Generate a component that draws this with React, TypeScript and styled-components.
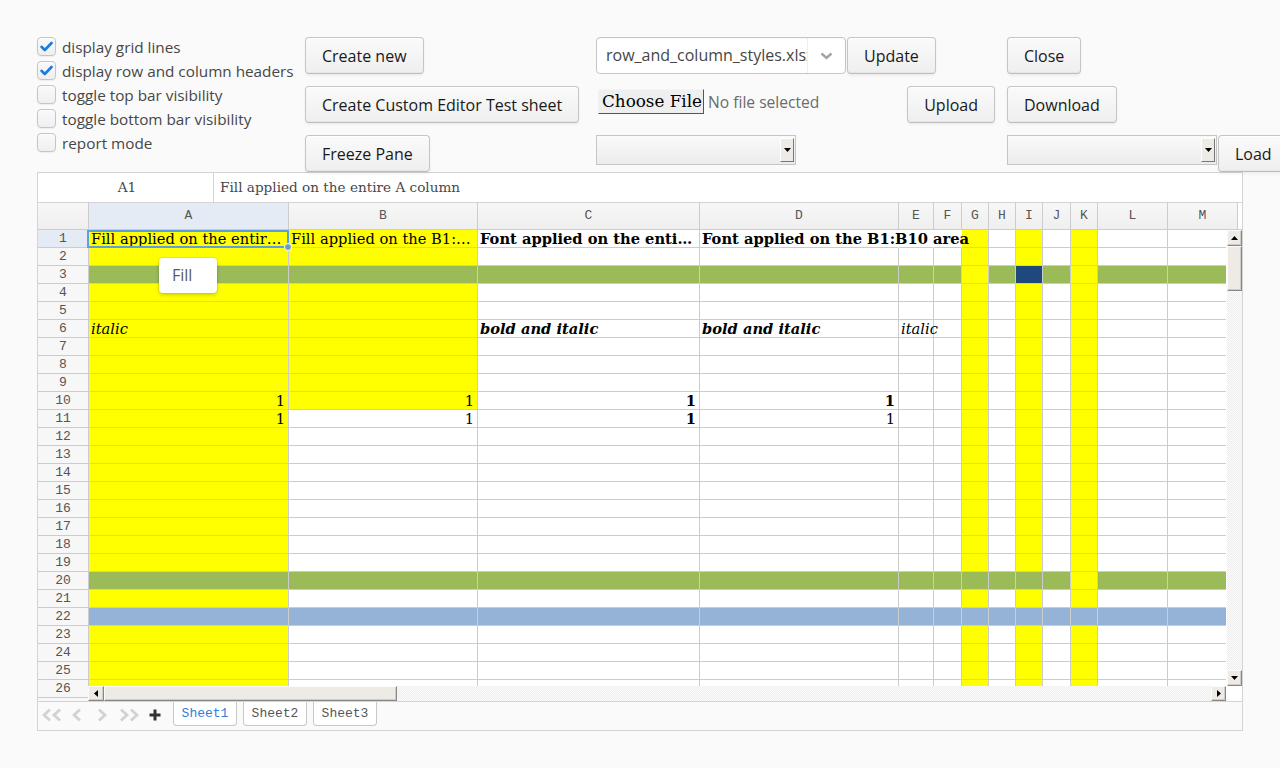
import React from "react";
import styled, { createGlobalStyle } from "styled-components";

const UI = `"Open Sans", "Noto Sans", sans-serif`;
const SERIF = `"DejaVu Serif", "Liberation Serif", serif`;
const MONO = `"Liberation Mono", "DejaVu Sans Mono", monospace`;

const YELLOW = "#ffff00";
const GREEN = "#9bbb59";
const BLUE = "#95b3d7";
const NAVY = "#1f497d";
const WHITE = "#ffffff";
const GRID = "#cccccc";

const COLS = [200, 189, 222, 199, 35, 28, 27, 27, 27, 28, 27, 70, 70];
const LETTERS = "ABCDEFGHIJKLM".split("");
const TEMPLATE = `51px ${COLS.map((w) => `${w}px`).join(" ")} 1fr`;
const ROWS = Array.from({ length: 27 }, (_, i) => i + 1);

const GlobalStyle = createGlobalStyle`
  html, body {
    margin: 0;
    padding: 0;
    background: #fafafa;
    overflow: hidden;
  }
  body {
    font-family: ${UI};
    color: #474747;
  }
`;

const Page = styled.div`
  width: 1280px;
  height: 768px;
  box-sizing: border-box;
  padding: 37px 0 0 37px;
`;

const Controls = styled.div`
  display: grid;
  grid-template-columns: 256px 279px 399px 273px;
  grid-template-rows: repeat(3, 37px);
  column-gap: 12px;
  row-gap: 12px;
`;

const Slot = styled.div<{ $col: number; $row: number; $justify?: string }>`
  grid-column: ${(p) => p.$col};
  grid-row: ${(p) => p.$row};
  display: flex;
  align-items: flex-start;
  justify-content: ${(p) => p.$justify ?? "flex-start"};
  gap: 1px;
  white-space: nowrap;
`;

const CheckList = styled.div`
  grid-column: 1;
  grid-row: 1 / span 3;
  display: flex;
  flex-direction: column;
  gap: 5px;
`;

const CheckRow = styled.label`
  display: flex;
  align-items: center;
  gap: 6px;
  height: 19px;
  font-size: 15.3px;
  line-height: 18px;
  color: #474747;
  white-space: nowrap;
`;

const Box = styled.span`
  width: 19px;
  height: 19px;
  box-sizing: border-box;
  border: 1px solid #c5c5c5;
  border-radius: 4px;
  background: linear-gradient(to bottom, #fafafa, #efefef);
  box-shadow: inset 0 1px 0 #fff, 0 1px 1px rgba(0, 0, 0, 0.05);
  display: flex;
  align-items: center;
  justify-content: center;
  flex-shrink: 0;
`;

const Button = styled.button`
  height: 37px;
  padding: 0 16px;
  box-sizing: border-box;
  font-family: ${UI};
  font-size: 16px;
  color: #191919;
  border: 1px solid #c5c5c5;
  border-bottom-color: #bcbcbc;
  border-radius: 4px;
  background: linear-gradient(to bottom, #fafafa 2%, #efefef 98%);
  box-shadow: inset 0 1px 0 #fff, inset 0 -1px 0 #e7e7e7,
    0 2px 3px rgba(0, 0, 0, 0.05);
  white-space: nowrap;
  flex-shrink: 0;
`;

const Combo = styled.div`
  width: 250px;
  height: 37px;
  box-sizing: border-box;
  display: flex;
  border: 1px solid #c5c5c5;
  border-radius: 4px;
  background: #fff;
  box-shadow: inset 0 1px 0 #f7f7f7;
`;

const ComboText = styled.div`
  width: 210px;
  overflow: hidden;
  padding-left: 9px;
  box-sizing: border-box;
  line-height: 35px;
  font-size: 16px;
  color: #464646;
  white-space: nowrap;
`;

const ComboArrow = styled.div`
  flex: 1;
  border-left: 1px solid #eeeeee;
  display: flex;
  align-items: center;
  justify-content: center;
`;

const FileGroup = styled.div`
  display: flex;
  align-items: center;
  margin: 3px 0 0 2px;
  height: 25px;
`;

const FileButton = styled.span`
  height: 25px;
  box-sizing: border-box;
  padding: 0 1px 0 3px;
  font-family: ${SERIF};
  font-size: 16.8px;
  line-height: 23px;
  color: #000;
  background: #efefef;
  border: 1px solid;
  border-color: #f4f4f4 #555 #555 #f4f4f4;
`;

const FileNote = styled.span`
  margin-left: 4px;
  font-size: 15.6px;
  color: #6b6b6b;
`;

const NativeSelect = styled.div<{ $w: number }>`
  width: ${(p) => p.$w}px;
  height: 30px;
  box-sizing: border-box;
  border: 1px solid #c5c5c5;
  background: linear-gradient(to bottom, #fafafa, #ececec);
  display: flex;
  justify-content: flex-end;
  align-items: center;
  padding-right: 1px;
  flex-shrink: 0;
`;

const SelectArrow = styled.span`
  width: 14px;
  height: 24px;
  box-sizing: border-box;
  background: #eeebe7;
  border: 1px solid;
  border-color: #fff #777 #777 #fff;
  display: flex;
  align-items: center;
  justify-content: center;
`;

const Sheet = styled.div`
  width: 1206px;
  box-sizing: border-box;
  border: 1px solid #d4d4d4;
  background: #fff;
  display: flex;
  flex-direction: column;
`;

const FormulaBar = styled.div`
  display: flex;
  height: 30px;
  box-sizing: border-box;
  border-bottom: 1px solid #d4d4d4;
`;

const NameBox = styled.div`
  width: 176px;
  box-sizing: border-box;
  border-right: 1px solid #d4d4d4;
  padding-left: 3px;
  text-align: center;
  font-family: ${SERIF};
  font-size: 13.6px;
  line-height: 29px;
  color: #474747;
`;

const FormulaText = styled.div`
  padding-left: 6px;
  font-family: ${SERIF};
  font-size: 13.6px;
  line-height: 29px;
  color: #474747;
`;

const HeaderRow = styled.div`
  display: grid;
  grid-template-columns: ${TEMPLATE};
  height: 27px;
  box-sizing: border-box;
  border-bottom: 1px solid ${GRID};
`;

const ColHeader = styled.div<{ $active?: boolean; $blank?: boolean }>`
  box-sizing: border-box;
  border-right: ${(p) => (p.$blank ? "none" : `1px solid ${GRID}`)};
  background: ${(p) =>
    p.$blank
      ? "#fff"
      : p.$active
      ? "#e4ebf4"
      : "linear-gradient(to bottom, #f7f7f7, #efefef)"};
  text-align: center;
  font-family: ${MONO};
  font-size: 13px;
  line-height: 26px;
  color: #555;
`;

const Body = styled.div`
  position: relative;
  height: 471px;
  overflow: hidden;
`;

const Grid = styled.div`
  display: grid;
  grid-template-columns: ${TEMPLATE};
  grid-auto-rows: 18px;
`;

const RowHeader = styled.div<{ $active?: boolean }>`
  box-sizing: border-box;
  border-right: 1px solid ${GRID};
  border-bottom: 1px solid ${GRID};
  background: ${(p) => (p.$active ? "#e4ebf4" : "#f7f7f7")};
  text-align: center;
  font-family: ${MONO};
  font-size: 13px;
  line-height: 17px;
  color: #555;
`;

const DataCell = styled.div<{ $bg: string; $noRight?: boolean }>`
  box-sizing: border-box;
  background: ${(p) => p.$bg};
  border-right: 1px solid ${(p) => (p.$noRight ? p.$bg : GRID)};
  border-bottom: 1px solid ${GRID};
  min-width: 0;
`;

const CellText = styled.span<{
  $bold?: boolean;
  $italic?: boolean;
  $right?: boolean;
  $clip?: boolean;
}>`
  position: relative;
  z-index: 1;
  display: block;
  padding: ${(p) => (p.$clip ? "0 1px 0 2px" : "0 3px 0 2px")};
  white-space: nowrap;
  overflow: ${(p) => (p.$clip ? "hidden" : "visible")};
  text-overflow: ${(p) => (p.$clip ? "ellipsis" : "clip")};
  text-align: ${(p) => (p.$right ? "right" : "left")};
  font-family: ${SERIF};
  font-size: 14.67px;
  line-height: 17px;
  font-weight: ${(p) => (p.$bold ? 700 : 400)};
  font-style: ${(p) => (p.$italic ? "italic" : "normal")};
  color: #000;
`;

const Selection = styled.div`
  position: absolute;
  left: 49px;
  top: 0;
  width: 202px;
  height: 18px;
  box-sizing: border-box;
  border: 2px solid #5d9ee0;
  z-index: 2;
  pointer-events: none;
`;

const FillHandle = styled.div`
  position: absolute;
  left: 246px;
  top: 13px;
  width: 8px;
  height: 8px;
  box-sizing: border-box;
  border-radius: 50%;
  background: #6b9fbb;
  border: 1px solid #fff;
  z-index: 3;
`;

const Tip = styled.div`
  position: absolute;
  left: 121px;
  top: 28px;
  width: 58px;
  height: 35px;
  box-sizing: border-box;
  padding-left: 13px;
  background: #fff;
  border-radius: 4px;
  box-shadow: 0 2px 4px rgba(0, 0, 0, 0.18), 0 0 0 1px rgba(0, 0, 0, 0.05);
  font-size: 16px;
  line-height: 35px;
  color: #5a5a5a;
  z-index: 4;
`;

const VScroll = styled.div`
  position: absolute;
  right: 0;
  top: 0;
  bottom: 15px;
  width: 16px;
  z-index: 5;
  display: flex;
  flex-direction: column;
  align-items: flex-end;
  background-color: #fafafa;
  background-image: repeating-conic-gradient(#ececec 0 25%, #fdfdfd 0 50%);
  background-size: 2px 2px;
  border-left: 1px solid #fff;
  box-sizing: border-box;
`;

const HScroll = styled.div`
  position: absolute;
  left: 50px;
  right: 16px;
  bottom: 0;
  height: 15px;
  z-index: 5;
  display: flex;
  background-color: #fafafa;
  background-image: repeating-conic-gradient(#ececec 0 25%, #fdfdfd 0 50%);
  background-size: 2px 2px;
`;

const Corner = styled.div`
  position: absolute;
  right: 0;
  bottom: 0;
  width: 16px;
  height: 15px;
  background: #fff;
  z-index: 5;
`;

const ScrollPart = styled.div<{ $w: number; $h: number }>`
  width: ${(p) => p.$w}px;
  height: ${(p) => p.$h}px;
  box-sizing: border-box;
  background: #eeebe7;
  border: 1px solid;
  border-color: #fbfbfb #888 #888 #fbfbfb;
  box-shadow: inset -1px -1px 0 #cfccc7;
  display: flex;
  align-items: center;
  justify-content: center;
  flex-shrink: 0;
`;

const Spacer = styled.div`
  flex: 1;
`;

const TabBar = styled.div`
  height: 29px;
  box-sizing: border-box;
  border-top: 1px solid #d4d4d4;
  background: #fafafa;
  display: flex;
  align-items: flex-start;
`;

const NavIcon = styled.span<{ $w: number }>`
  width: ${(p) => p.$w}px;
  height: 26px;
  display: flex;
  align-items: center;
  justify-content: center;
  flex-shrink: 0;
`;

const Tabs = styled.div`
  display: flex;
  gap: 6px;
  margin-left: 7px;
`;

const Tab = styled.div<{ $active?: boolean }>`
  width: 64px;
  height: 24px;
  box-sizing: border-box;
  border: 1px solid #c8c8c8;
  border-top: none;
  border-radius: 0 0 4px 4px;
  background: #fff;
  text-align: center;
  font-family: ${MONO};
  font-size: 13px;
  line-height: 23px;
  color: ${(p) => (p.$active ? "#2f7fd6" : "#555")};
`;

type Content = {
  text: string;
  bold?: boolean;
  italic?: boolean;
  right?: boolean;
  clip?: boolean;
};

const CONTENT: Record<string, Content> = {
  "1:0": { text: "Fill applied on the entire A column", clip: true },
  "1:1": { text: "Fill applied on the B1:B10 area", clip: true },
  "1:2": { text: "Font applied on the entire C column", bold: true, clip: true },
  "1:3": { text: "Font applied on the B1:B10 area", bold: true },
  "6:0": { text: "italic", italic: true },
  "6:2": { text: "bold and italic", bold: true, italic: true },
  "6:3": { text: "bold and italic", bold: true, italic: true },
  "6:4": { text: "italic", italic: true },
  "10:0": { text: "1", right: true },
  "10:1": { text: "1", right: true },
  "10:2": { text: "1", right: true, bold: true },
  "10:3": { text: "1", right: true, bold: true },
  "11:0": { text: "1", right: true },
  "11:1": { text: "1", right: true },
  "11:2": { text: "1", right: true, bold: true },
  "11:3": { text: "1", right: true },
};

const NO_RIGHT = new Set(["1:3", "1:4", "1:5"]);

function fillFor(row: number, col: number): string {
  if (row === 22) return BLUE;
  if (row === 3) {
    if (col === 6 || col === 10) return YELLOW;
    if (col === 8) return NAVY;
    return GREEN;
  }
  if (row === 20) return col === 10 ? YELLOW : GREEN;
  if (col === 0) return YELLOW;
  if (col === 1 && row <= 10) return YELLOW;
  if (col === 6 || col === 8 || col === 10) return YELLOW;
  return WHITE;
}

const Check = () => (
  <svg width="13" height="11" viewBox="0 0 13 11">
    <path d="M1.5 5.8 L4.8 9 L11.5 2" fill="none" stroke="#197de1" strokeWidth="2.6" strokeLinecap="round" strokeLinejoin="round" />
  </svg>
);

const ChevronDown = () => (
  <svg width="13" height="8" viewBox="0 0 13 8">
    <path d="M1.5 1.5 L6.5 6 L11.5 1.5" fill="none" stroke="#a3a3a3" strokeWidth="2.4" />
  </svg>
);

const Tri = ({ dir }: { dir: "up" | "down" | "left" | "right" }) => {
  const pts = {
    up: "0,4 3.5,0 7,4",
    down: "0,0 7,0 3.5,4",
    left: "4,0 4,7 0,3.5",
    right: "0,0 0,7 4,3.5",
  }[dir];
  const vertical = dir === "up" || dir === "down";
  return (
    <svg width={vertical ? 7 : 4} height={vertical ? 4 : 7}>
      <polygon points={pts} fill="#000" />
    </svg>
  );
};

const Chev = ({ left, double }: { left?: boolean; double?: boolean }) => {
  const one = left ? "M8 1.5 L2 7 L8 12.5" : "M2 1.5 L8 7 L2 12.5";
  return (
    <svg width={double ? 20 : 10} height="14" viewBox={double ? "0 0 20 14" : "0 0 10 14"}>
      <path d={one} fill="none" stroke="#d2d2d2" strokeWidth="2.8" />
      {double && (
        <path d={one} transform="translate(10 0)" fill="none" stroke="#d2d2d2" strokeWidth="2.8" />
      )}
    </svg>
  );
};

const Plus = () => (
  <svg width="12" height="12" viewBox="0 0 12 12">
    <path d="M6 0.5 V11.5 M0.5 6 H11.5" stroke="#333" strokeWidth="3" />
  </svg>
);

const OPTIONS = [
  { label: "display grid lines", checked: true },
  { label: "display row and column headers", checked: true },
  { label: "toggle top bar visibility", checked: false },
  { label: "toggle bottom bar visibility", checked: false },
  { label: "report mode", checked: false },
];

export default function App() {
  return (
    <Page>
      <GlobalStyle />
      <Controls>
        <CheckList>
          {OPTIONS.map((o) => (
            <CheckRow key={o.label}>
              <Box>{o.checked && <Check />}</Box>
              {o.label}
            </CheckRow>
          ))}
        </CheckList>

        <Slot $col={2} $row={1}>
          <Button>Create new</Button>
        </Slot>
        <Slot $col={2} $row={2}>
          <Button>Create Custom Editor Test sheet</Button>
        </Slot>
        <Slot $col={2} $row={3}>
          <Button>Freeze Pane</Button>
        </Slot>

        <Slot $col={3} $row={1}>
          <Combo>
            <ComboText>row_and_column_styles.xlsx</ComboText>
            <ComboArrow>
              <ChevronDown />
            </ComboArrow>
          </Combo>
          <Button>Update</Button>
        </Slot>
        <Slot $col={3} $row={2} $justify="space-between">
          <FileGroup>
            <FileButton>Choose File</FileButton>
            <FileNote>No file selected</FileNote>
          </FileGroup>
          <Button>Upload</Button>
        </Slot>
        <Slot $col={3} $row={3}>
          <NativeSelect $w={200}>
            <SelectArrow>
              <Tri dir="down" />
            </SelectArrow>
          </NativeSelect>
        </Slot>

        <Slot $col={4} $row={1}>
          <Button>Close</Button>
        </Slot>
        <Slot $col={4} $row={2}>
          <Button>Download</Button>
        </Slot>
        <Slot $col={4} $row={3}>
          <NativeSelect $w={210}>
            <SelectArrow>
              <Tri dir="down" />
            </SelectArrow>
          </NativeSelect>
          <Button>Load</Button>
        </Slot>
      </Controls>

      <Sheet>
        <FormulaBar>
          <NameBox>A1</NameBox>
          <FormulaText>Fill applied on the entire A column</FormulaText>
        </FormulaBar>

        <HeaderRow>
          <ColHeader />
          {LETTERS.map((l, i) => (
            <ColHeader key={l} $active={i === 0}>
              {l}
            </ColHeader>
          ))}
          <ColHeader $blank />
        </HeaderRow>

        <Body>
          <Grid>
            {ROWS.map((r) => (
              <React.Fragment key={r}>
                <RowHeader $active={r === 1}>{r}</RowHeader>
                {COLS.map((_, c) => {
                  const key = `${r}:${c}`;
                  const content = CONTENT[key];
                  const bg = fillFor(r, c);
                  return (
                    <DataCell key={key} $bg={bg} $noRight={NO_RIGHT.has(key)}>
                      {content && (
                        <CellText
                          $bold={content.bold}
                          $italic={content.italic}
                          $right={content.right}
                          $clip={content.clip}
                        >
                          {content.text}
                        </CellText>
                      )}
                    </DataCell>
                  );
                })}
                <DataCell $bg={WHITE} $noRight />
              </React.Fragment>
            ))}
          </Grid>

          <Selection />
          <FillHandle />
          <Tip>Fill</Tip>

          <VScroll>
            <ScrollPart $w={15} $h={16}>
              <Tri dir="up" />
            </ScrollPart>
            <ScrollPart $w={15} $h={45} />
            <Spacer />
            <ScrollPart $w={15} $h={16}>
              <Tri dir="down" />
            </ScrollPart>
          </VScroll>
          <HScroll>
            <ScrollPart $w={16} $h={15}>
              <Tri dir="left" />
            </ScrollPart>
            <ScrollPart $w={293} $h={15} />
            <Spacer />
            <ScrollPart $w={15} $h={15}>
              <Tri dir="right" />
            </ScrollPart>
          </HScroll>
          <Corner />
        </Body>

        <TabBar>
          <NavIcon $w={28}>
            <Chev left double />
          </NavIcon>
          <NavIcon $w={22}>
            <Chev left />
          </NavIcon>
          <NavIcon $w={27}>
            <Chev />
          </NavIcon>
          <NavIcon $w={28}>
            <Chev double />
          </NavIcon>
          <NavIcon $w={23}>
            <Plus />
          </NavIcon>
          <Tabs>
            <Tab $active>Sheet1</Tab>
            <Tab>Sheet2</Tab>
            <Tab>Sheet3</Tab>
          </Tabs>
        </TabBar>
      </Sheet>
    </Page>
  );
}
